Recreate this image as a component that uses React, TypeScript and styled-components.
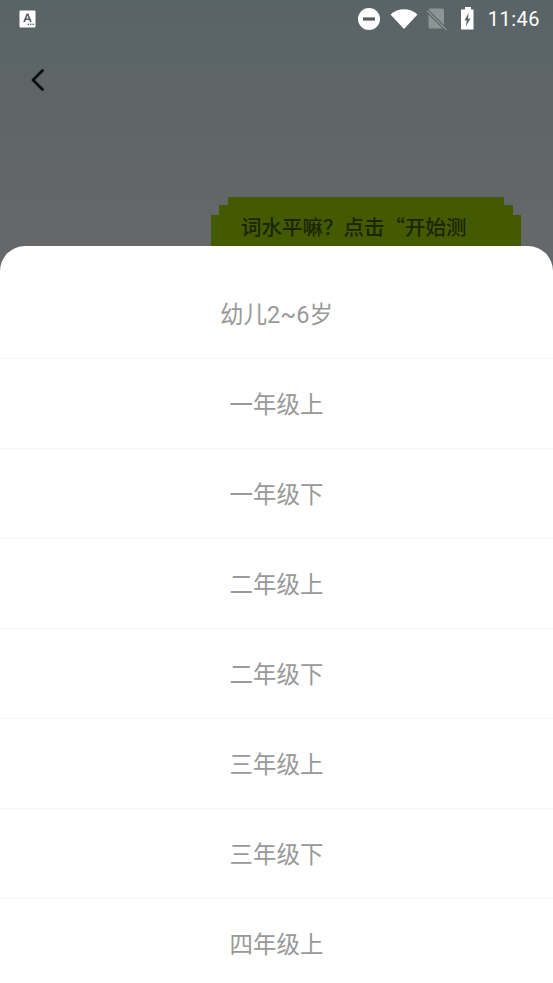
import React from 'react'
import styled, { createGlobalStyle } from 'styled-components';

const grades = ['幼儿2~6岁', '一年级上', '一年级下', '二年级上', '二年级下', '三年级上', '三年级下', '四年级上'];

const App = () => {
  return (
    <Page>
      <GlobalStyle/>
      <Backdrop>
        <StatusBar>
          <KeyboardBadge>
            <svg width="18" height="18" viewBox="0 0 18 18">
              <rect x="0.5" y="0.5" width="16" height="17" rx="1" fill="#fff"/>
              <path d="M4.2 12 L7.6 3.6 H9.4 L12.8 12 H10.9 L10.2 10 H6.8 L6.1 12 Z M7.4 8.5 H9.6 L8.5 5.5 Z" fill="#555e60" fillRule="evenodd"/>
              <rect x="8.5" y="13.6" width="1.4" height="1.4" fill="#555e60"/>
              <rect x="11" y="13.6" width="1.4" height="1.4" fill="#555e60"/>
              <rect x="13.5" y="13.6" width="1.4" height="1.4" fill="#555e60"/>
            </svg>
          </KeyboardBadge>
          <StatusIcons>
            <svg width="24" height="24" viewBox="0 0 24 24">
              <circle cx="12" cy="12" r="11" fill="#fff"/>
              <rect x="6" y="10.4" width="12" height="3.2" fill="#555e60"/>
            </svg>
            <svg width="28" height="22" viewBox="0 0 28 22">
              <path d="M0.5 6.5 C8 -0.5 20 -0.5 27.5 6.5 L14 21 Z" fill="#fff"/>
            </svg>
            <svg width="22" height="24" viewBox="0 0 22 24">
              <path d="M3 1.5 H15.5 Q17 1.5 17 3 V20 Q17 21.5 15.5 21.5 H3 Q1.5 21.5 1.5 20 V3 Q1.5 1.5 3 1.5 Z" fill="#8d9495"/>
              <path d="M0 3.5 L19.5 23" stroke="#555e60" strokeWidth="3.4"/>
              <path d="M0 3.5 L19.5 23" stroke="#8d9495" strokeWidth="1.4"/>
            </svg>
            <svg width="18" height="24" viewBox="0 0 18 24">
              <path d="M7 0 H13 V2.5 H15.5 V22.5 H3 V2.5 H7 Z M10.5 6 L6.5 13.5 H8.8 L7.8 19.5 L12.5 11.5 H10 Z" fill="#fff" fillRule="evenodd"/>
            </svg>
            <Clock>11:46</Clock>
          </StatusIcons>
        </StatusBar>
        <BackRow>
          <svg width="16" height="24" viewBox="0 0 16 24" fill="none">
            <path d="M13.5 1.5 L4 11 L13.5 20.5" stroke="#0a0d10" strokeWidth="2.8" strokeLinecap="round" strokeLinejoin="round"/>
          </svg>
        </BackRow>
        <Bubble>
          <BubbleStep $inset={17} $height={8}/>
          <BubbleStep $inset={8} $height={10}/>
          <BubbleBody>词水平嘛？点击“开始测</BubbleBody>
        </Bubble>
      </Backdrop>
      <Sheet>
        {grades.map((grade) => (
          <GradeRow key={grade}>{grade}</GradeRow>
        ))}
      </Sheet>
    </Page>
  )
}

const GlobalStyle = createGlobalStyle`
  html, body {
    margin: 0;
    padding: 0;
    height: 100%;
    overflow: hidden;
  }
  body {
    font-family: Roboto, "Noto Sans CJK SC", sans-serif;
  }
`

const Page = styled.div`
  width: 553px;
  height: 983px;
  display: flex;
  flex-direction: column;
  overflow: hidden;
  background: #fff;
`

const Backdrop = styled.div`
  height: 271px;
  flex-shrink: 0;
  overflow: hidden;
  background: linear-gradient(180deg, #596466 0px, #666769 246px);
`

const StatusBar = styled.div`
  height: 37px;
  padding: 0 13px 0 19px;
  display: flex;
  align-items: center;
  justify-content: space-between;
`

const KeyboardBadge = styled.div`
  display: flex;
`

const StatusIcons = styled.div`
  display: flex;
  align-items: center;
  gap: 9px;
`

const Clock = styled.span`
  margin-left: 3px;
  color: #fff;
  font-size: 20px;
  letter-spacing: 0.5px;
`

const BackRow = styled.div`
  height: 86px;
  padding: 32px 0 0 29px;
  box-sizing: border-box;
  display: flex;
  align-items: flex-start;
`

const Bubble = styled.div`
  width: 310px;
  margin: 74px 0 0 211px;
`

const BubbleStep = styled.div<{ $inset: number; $height: number }>`
  height: ${(props) => props.$height}px;
  margin: 0 ${(props) => props.$inset}px;
  background: #435a00;
`

const BubbleBody = styled.div`
  height: 60px;
  padding: 0 0 0 30px;
  box-sizing: border-box;
  background: #435a00;
  color: #1a2600;
  font-family: "Noto Sans CJK SC", sans-serif;
  font-size: 20.5px;
  line-height: 22px;
  font-weight: 500;
  white-space: nowrap;
`

const Sheet = styled.div`
  flex: 1;
  margin-top: -25px;
  padding-top: 23px;
  border-radius: 25px 25px 0 0;
  background: #fff;
  overflow: hidden;
`

const GradeRow = styled.div`
  height: 90px;
  padding-bottom: 2px;
  box-sizing: border-box;
  display: flex;
  align-items: center;
  justify-content: center;
  border-bottom: 1px solid #f5f5f5;
  color: #999;
  font-size: 23.5px;
`

export default App
